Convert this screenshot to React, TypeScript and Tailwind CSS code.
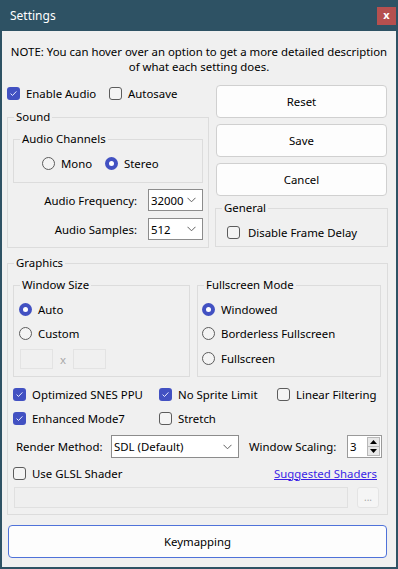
import React from "react";

function Check({ checked }: { checked?: boolean }) {
  if (checked)
    return (
      <span className="w-[13px] h-[13px] shrink-0 rounded-[3px] bg-[#4251c2] flex items-center justify-center">
        <svg width="9" height="9" viewBox="0 0 9 9">
          <path d="M1.6 4.6 L3.5 6.5 L7.4 2.4" stroke="#e8ebff" strokeWidth="1" fill="none" />
        </svg>
      </span>
    );
  return <span className="w-[13px] h-[13px] shrink-0 rounded-[3px] border border-[#5c5c5c] bg-[#f4f4f4]" />;
}

function Radio({ checked }: { checked?: boolean }) {
  if (checked)
    return (
      <span className="w-[13px] h-[13px] shrink-0 rounded-full bg-[#4251c2] flex items-center justify-center">
        <span className="w-[5px] h-[5px] rounded-full bg-white" />
      </span>
    );
  return <span className="w-[13px] h-[13px] shrink-0 rounded-full border border-[#5c5c5c] bg-[#f4f4f4]" />;
}

function CheckItem({ checked, label, className = "" }: { checked?: boolean; label: string; className?: string }) {
  return (
    <div className={"flex items-center h-[16px] gap-[6px] " + className}>
      <Check checked={checked} />
      <span className="whitespace-nowrap">{label}</span>
    </div>
  );
}

function RadioItem({ checked, label, className = "" }: { checked?: boolean; label: string; className?: string }) {
  return (
    <div className={"flex items-center h-[16px] gap-[6px] " + className}>
      <Radio checked={checked} />
      <span className="whitespace-nowrap">{label}</span>
    </div>
  );
}

function Chevron() {
  return (
    <svg width="9" height="6" viewBox="0 0 9 6" className="shrink-0">
      <path d="M0.5 0.8 L4.5 4.8 L8.5 0.8" stroke="#606060" strokeWidth="1" fill="none" />
    </svg>
  );
}

function Combo({ value, className = "" }: { value: string; className?: string }) {
  return (
    <div className={"flex items-center justify-between bg-white border border-[#8c8c8c] pl-[2px] pr-[6px] " + className}>
      <span className="whitespace-nowrap">{value}</span>
      <Chevron />
    </div>
  );
}

function Legend({ children }: { children: React.ReactNode }) {
  return <legend className="ml-[6px] px-[2px] leading-[16px]">{children}</legend>;
}

function Button({ label, className = "" }: { label: string; className?: string }) {
  return (
    <div className={"flex items-center justify-center bg-[#fdfdfd] border border-[#d0d0d0] rounded-[4px] " + className}>
      {label}
    </div>
  );
}

export default function App() {
  return (
    <div className="w-[398px] h-[569px] bg-[#2e5264] flex flex-col font-['Noto_Sans','Open_Sans',sans-serif] text-[11.4px] leading-[15px] text-black">
      <div className="h-[31px] shrink-0 flex items-center justify-between pl-[10px] pr-[2px]">
        <span className="text-white text-[12px]">Settings</span>
        <div className="w-[19px] h-[18px] bg-[#b5504f] flex items-center justify-center text-white text-[11px] font-bold leading-none pb-[2px]">
          x
        </div>
      </div>
      <div className="mx-[2px] mb-[2px] flex-1 bg-[#f0f0f0] pl-[5px] pr-[8px] flex flex-col">
        <div className="pt-[13px] text-center -ml-[5px] -mr-[8px] whitespace-nowrap">
          NOTE: You can hover over an option to get a more detailed description
          <br />
          of what each setting does.
        </div>

        <div className="mt-[11px] flex gap-[6px]">
          {/* left column */}
          <div className="w-[202px] flex flex-col">
            <div className="flex items-center h-[16px]">
              <CheckItem checked label="Enable Audio" className="w-[102px]" />
              <CheckItem label="Autosave" />
            </div>
            <fieldset className="mt-[8px] border border-[#dcdcdc] pb-[7px]">
              <Legend>Sound</Legend>
              <fieldset className="mt-[6px] mx-[5px] border border-[#dcdcdc]">
                <Legend>Audio Channels</Legend>
                <div className="flex items-center pl-[28px] pt-[8px] pb-[11px]">
                  <RadioItem label="Mono" className="w-[63px]" />
                  <RadioItem checked label="Stereo" />
                </div>
              </fieldset>
              <div className="mt-[6px] flex items-center justify-end pr-[5px] gap-[11px]">
                <span>Audio Frequency:</span>
                <Combo value="32000" className="w-[55px] h-[22px]" />
              </div>
              <div className="mt-[7px] flex items-center justify-end pr-[5px] gap-[11px]">
                <span>Audio Samples:</span>
                <Combo value="512" className="w-[55px] h-[22px]" />
              </div>
            </fieldset>
          </div>

          {/* right column */}
          <div className="w-[173px] flex flex-col">
            <div className="flex flex-col gap-[6px] px-[1px]">
              <Button label="Reset" className="h-[33px]" />
              <Button label="Save" className="h-[33px]" />
              <Button label="Cancel" className="h-[33px]" />
            </div>
            <fieldset className="mt-[4px] border border-[#dcdcdc]">
              <Legend>General</Legend>
              <div className="pt-[8px] pb-[6px] pl-[11px]">
                <CheckItem label="Disable Frame Delay" className="gap-[8px]" />
              </div>
            </fieldset>
          </div>
        </div>

        <fieldset className="mt-[7px] border border-[#dcdcdc] pb-[6px]">
          <Legend>Graphics</Legend>
          <div className="mt-[6px] flex gap-[7px] pl-[5px] pr-[6px]">
            <fieldset className="w-[177px] border border-[#dcdcdc]">
              <Legend>Window Size</Legend>
              <div className="pt-[8px] pb-[7px] pl-[5px]">
                <RadioItem checked label="Auto" />
                <RadioItem label="Custom" className="mt-[8px]" />
                <div className="mt-[8px] flex items-center ml-[1px]">
                  <div className="w-[33px] h-[20px] border border-[#e3e3e3] bg-[#f0f0f0]" />
                  <span className="w-[20px] text-center text-[#a8a8a8]">x</span>
                  <div className="w-[33px] h-[20px] border border-[#e3e3e3] bg-[#f0f0f0]" />
                </div>
              </div>
            </fieldset>
            <fieldset className="flex-1 border border-[#dcdcdc]">
              <Legend>Fullscreen Mode</Legend>
              <div className="pt-[8px] pl-[4px]">
                <RadioItem checked label="Windowed" />
                <RadioItem label="Borderless Fullscreen" className="mt-[8px]" />
                <RadioItem label="Fullscreen" className="mt-[9px]" />
              </div>
            </fieldset>
          </div>

          <div className="mt-[9px] flex items-center pl-[5px]">
            <CheckItem checked label="Optimized SNES PPU" className="w-[146px]" />
            <CheckItem checked label="No Sprite Limit" className="w-[118px]" />
            <CheckItem label="Linear Filtering" />
          </div>
          <div className="mt-[8px] flex items-center pl-[5px]">
            <CheckItem checked label="Enhanced Mode7" className="w-[146px]" />
            <CheckItem label="Stretch" />
          </div>

          <div className="mt-[9px] flex items-center h-[23px] pl-[8px]">
            <span className="w-[95px]">Render Method:</span>
            <Combo value="SDL (Default)" className="w-[128px] h-[23px]" />
            <span className="ml-[10px] w-[98px]">Window Scaling:</span>
            <div className="w-[35px] h-[23px] border border-[#9a9a9a] bg-white flex items-center pl-[2px] pr-[1px]">
              <span className="flex-1">3</span>
              <div className="flex flex-col w-[13px] h-[19px] border border-[#b8b8b8]">
                <div className="flex-1 bg-[#e8e8e8] flex items-center justify-center border-b border-[#b8b8b8]">
                  <svg width="7" height="4" viewBox="0 0 7 4">
                    <path d="M0 4 L3.5 0 L7 4 Z" fill="#000" />
                  </svg>
                </div>
                <div className="flex-1 bg-[#e8e8e8] flex items-center justify-center">
                  <svg width="7" height="4" viewBox="0 0 7 4">
                    <path d="M0 0 L3.5 4 L7 0 Z" fill="#000" />
                  </svg>
                </div>
              </div>
            </div>
          </div>

          <div className="mt-[7px] flex items-center justify-between h-[16px] pl-[5px] pr-[10px]">
            <CheckItem label="Use GLSL Shader" />
            <span className="text-[#3a1fe6] underline">Suggested Shaders</span>
          </div>

          <div className="mt-[6px] flex items-center pl-[6px]">
            <div className="w-[334px] h-[21px] border border-[#e0e0e0] bg-[#efefef]" />
            <div className="ml-[9px] w-[22px] h-[21px] border border-[#e4e4e4] rounded-[3px] bg-[#f5f5f5] flex items-center justify-center text-[#a8a8a8] text-[10px]">
              ...
            </div>
          </div>
        </fieldset>

        <div className="mt-[10px] ml-[1px] w-[379px] h-[33px] flex items-center justify-center bg-[#fdfdfd] border border-[#4f72d9] rounded-[4px]">
          Keymapping
        </div>
      </div>
    </div>
  );
}
